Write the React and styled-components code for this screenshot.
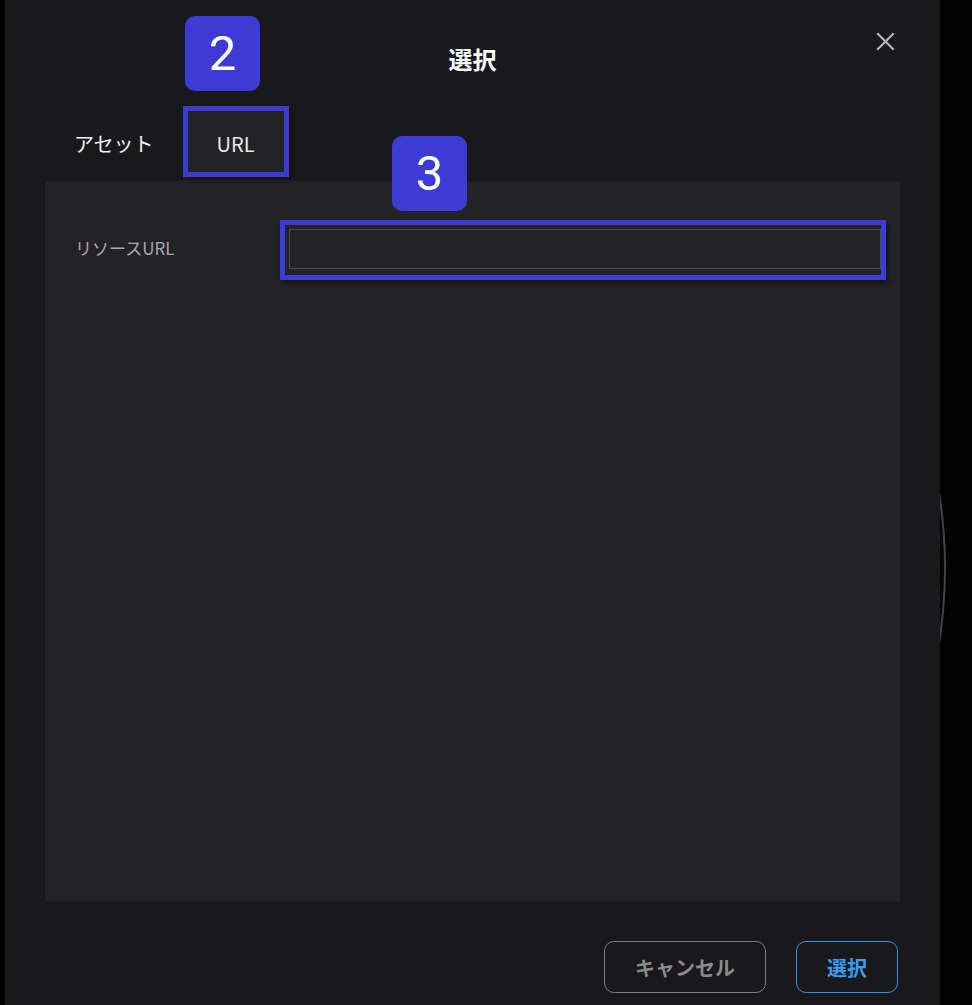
import React from 'react';
import styled, { createGlobalStyle } from 'styled-components';

const GlobalStyle = createGlobalStyle`
  html, body {
    margin: 0;
    padding: 0;
    background: #000;
    overflow: hidden;
  }
  body {
    font-family: "Noto Sans", "Noto Sans CJK JP", sans-serif;
  }
`;

const Page = styled.div`
  position: relative;
  width: 972px;
  height: 1005px;
  overflow: hidden;
  background: #020203;
`;

/* faint ring of the page behind the dialog, only its right edge shows */
const BackRing = styled.div`
  position: absolute;
  left: 2px;
  top: 96px;
  width: 940px;
  height: 940px;
  border-radius: 50%;
  border: 2px solid rgba(110, 128, 132, 0.55);
  filter: blur(0.6px);
  clip-path: inset(0 0 0 60%);
`;

const Dialog = styled.div`
  position: relative;
  margin-left: 5px;
  width: 935px;
  height: 1005px;
  background: #19191b;
  display: flex;
  flex-direction: column;
`;

const Header = styled.div`
  height: 106px;
  display: flex;
  justify-content: center;
  padding-top: 43px;
  box-sizing: border-box;
`;

const Title = styled.h1`
  margin: 0;
  font-family: "Noto Sans CJK JP", sans-serif;
  font-size: 24px;
  font-weight: 700;
  line-height: 32px;
  color: #fff;
`;

const CloseButton = styled.button`
  position: absolute;
  top: 30px;
  right: 44px;
  width: 22px;
  height: 22px;
  padding: 0;
  border: none;
  background: none;
  cursor: pointer;
  display: flex;
  align-items: center;
  justify-content: center;
`;

const Tabs = styled.div`
  display: flex;
  height: 75px;
  padding-left: 40px;
`;

const Tab = styled.div`
  min-width: 106px;
  padding: 0 29px;
  box-sizing: border-box;
  display: flex;
  align-items: center;
  justify-content: center;
  padding-bottom: 1px;
  font-family: "Noto Sans CJK JP", sans-serif;
  font-size: 20px;
  color: ${p => (p.$active ? '#e8e8ea' : '#f2f2f2')};
  background: ${p => (p.$active ? '#232327' : 'transparent')};
`;

const Panel = styled.div`
  margin: 0 40px;
  height: 720px;
  background: #232227;
  padding: 48px 19px 0 30px;
  box-sizing: border-box;
`;

const FieldRow = styled.div`
  display: grid;
  grid-template-columns: 214px 1fr;
  align-items: center;
`;

const Label = styled.label`
  font-family: "Noto Sans CJK JP", sans-serif;
  font-size: 17px;
  color: #a9a9ad;
  padding-bottom: 3px;
`;

const Input = styled.input`
  height: 40px;
  box-sizing: border-box;
  border: 1px solid #4a4a4d;
  background: #232227;
  color: #eee;
  font-size: 16px;
  padding: 0 10px;
  outline: none;
`;

const Footer = styled.div`
  display: flex;
  justify-content: flex-end;
  gap: 30px;
  padding: 40px 42px 0 0;
`;

const Button = styled.button`
  height: 52px;
  padding: 0 30px;
  border-radius: 10px;
  background: transparent;
  border: 1px solid ${p => (p.$primary ? '#2f93e6' : '#7c7c80')};
  color: ${p => (p.$primary ? '#3a9cf0' : '#8a8a8e')};
  font-family: "Noto Sans CJK JP", sans-serif;
  font-size: 20px;
  font-weight: 700;
  cursor: pointer;
`;

const Highlight = styled.div`
  position: absolute;
  left: ${p => p.$x}px;
  top: ${p => p.$y}px;
  width: ${p => p.$w}px;
  height: ${p => p.$h}px;
  box-sizing: border-box;
  border: 5px solid #3c3cd4;
  box-shadow: 2px 3px 5px rgba(0, 0, 0, 0.45);
  pointer-events: none;
`;

const Badge = styled.div`
  position: absolute;
  left: ${p => p.$x}px;
  top: ${p => p.$y}px;
  width: 75px;
  height: 75px;
  border-radius: 10px;
  background: #3c3cd4;
  color: #fff;
  font-family: Roboto, "Noto Sans", sans-serif;
  font-size: 49px;
  line-height: 75px;
  text-align: center;
`;

export default function App() {
  return (
    <>
      <GlobalStyle />
      <Page>
        <BackRing />
        <Dialog>
          <Header>
            <Title>選択</Title>
          </Header>
          <CloseButton aria-label="閉じる">
            <svg width="19" height="19" viewBox="0 0 19 19">
              <path d="M2 2 L17 17 M17 2 L2 17" stroke="#b4b4b8" strokeWidth="2.2" strokeLinecap="square" />
            </svg>
          </CloseButton>
          <Tabs>
            <Tab>アセット</Tab>
            <Tab $active>URL</Tab>
          </Tabs>
          <Panel>
            <FieldRow>
              <Label>リソースURL</Label>
              <Input type="text" />
            </FieldRow>
          </Panel>
          <Footer>
            <Button>キャンセル</Button>
            <Button $primary>選択</Button>
          </Footer>

          <Highlight $x={178} $y={106} $w={106} $h={71} />
          <Badge $x={180} $y={16}>2</Badge>
          <Highlight $x={275} $y={220} $w={606} $h={60} />
          <Badge $x={387} $y={136}>3</Badge>
        </Dialog>
      </Page>
    </>
  );
}
